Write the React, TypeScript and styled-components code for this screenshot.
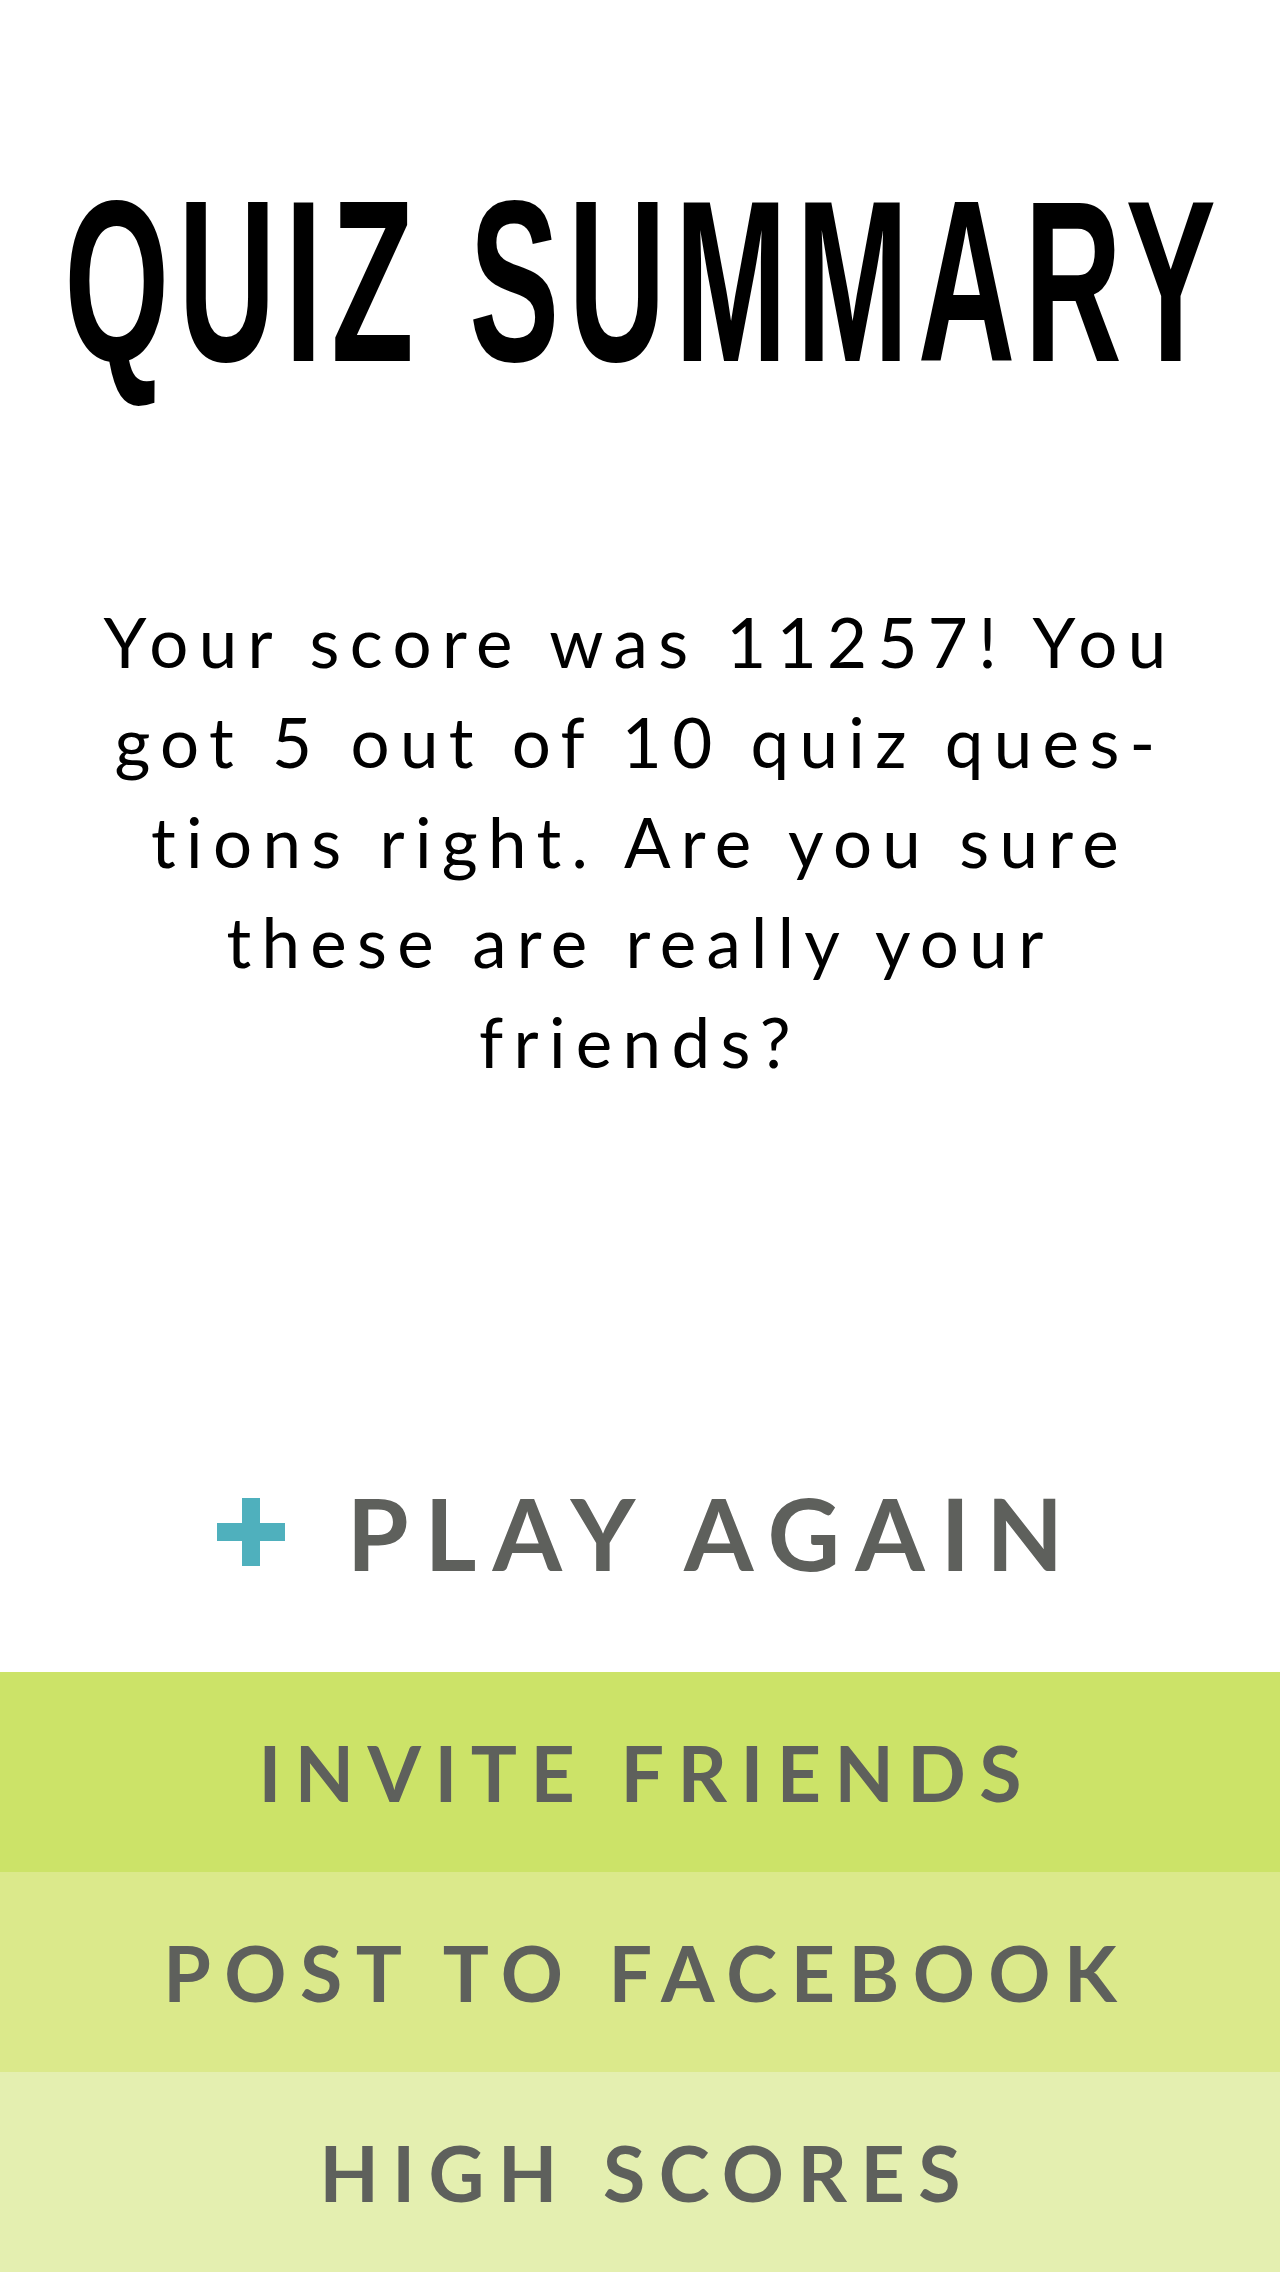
import React from "react";
import styled, { createGlobalStyle } from "styled-components";

const Global = createGlobalStyle`
  html, body { margin: 0; padding: 0; background: #ffffff; }
  body { font-family: "Lato", "Liberation Sans", sans-serif; }
`;

const Page = styled.main`
  width: 1280px;
  min-height: 2272px;
  display: flex;
  flex-direction: column;
  align-items: stretch;
  background: #ffffff;
`;

const TitleWrap = styled.header`
  height: 135px;
  margin-top: 167px;
  display: flex;
  justify-content: center;
`;

const TitleText = styled.h1`
  margin: 0;
  font-family: "Liberation Sans", Arial, sans-serif;
  font-weight: 700;
  font-size: 135px;
  line-height: 135px;
  color: #000000;
  white-space: nowrap;
  letter-spacing: 9px;
  margin-right: -9px;
  transform: scaleY(1.7);
  transform-origin: 50% 0;
`;

const Message = styled.p`
  margin: 290px 0 0;
  font-family: "Lato", sans-serif;
  font-weight: 400;
  font-size: 69px;
  line-height: 100px;
  letter-spacing: 0.15em;
  text-align: center;
  color: #000000;
`;

const PlayRow = styled.button`
  margin: 390px auto 0;
  padding: 0;
  border: 0;
  background: transparent;
  display: flex;
  align-items: center;
  gap: 62px;
  cursor: pointer;
`;

const Plus = styled.svg`
  width: 68px;
  height: 68px;
  flex: none;
`;

const PlayLabel = styled.span`
  font-family: "Lato", sans-serif;
  font-weight: 700;
  font-size: 100px;
  line-height: 100px;
  letter-spacing: 0.16em;
  color: #5e605c;
  margin-right: -0.16em;
`;

const Actions = styled.nav`
  margin-top: 90px;
  display: flex;
  flex-direction: column;
`;

const ActionBand = styled.button<{ $bg: string }>`
  height: 200px;
  border: 0;
  padding: 0;
  margin: 0;
  width: 100%;
  background: ${(p) => p.$bg};
  display: flex;
  align-items: center;
  justify-content: center;
  font-family: "Lato", sans-serif;
  font-weight: 700;
  font-size: 77px;
  line-height: 1;
  letter-spacing: 0.175em;
  color: #5e605c;
  cursor: pointer;
`;

const BandLabel = styled.span`
  margin-right: -0.175em;
`;

const actions = [
  { label: "INVITE FRIENDS", bg: "#cce368" },
  { label: "POST TO FACEBOOK", bg: "#dbe98b" },
  { label: "HIGH SCORES", bg: "#e4efb0" },
];

export default function App() {
  return (
    <Page>
      <Global />
      <TitleWrap>
        <TitleText>QUIZ SUMMARY</TitleText>
      </TitleWrap>
      <Message>
        Your score was 11257! You
        <br />
        got 5 out of 10 quiz ques-
        <br />
        tions right. Are you sure
        <br />
        these are really your
        <br />
        friends?
      </Message>
      <PlayRow>
        <Plus viewBox="0 0 68 68" aria-hidden="true">
          <rect x="25" y="0" width="18" height="68" fill="#4fb0bd" />
          <rect x="0" y="25" width="68" height="18" fill="#4fb0bd" />
        </Plus>
        <PlayLabel>PLAY AGAIN</PlayLabel>
      </PlayRow>
      <Actions>
        {actions.map((a) => (
          <ActionBand key={a.label} $bg={a.bg}>
            <BandLabel>{a.label}</BandLabel>
          </ActionBand>
        ))}
      </Actions>
    </Page>
  );
}
